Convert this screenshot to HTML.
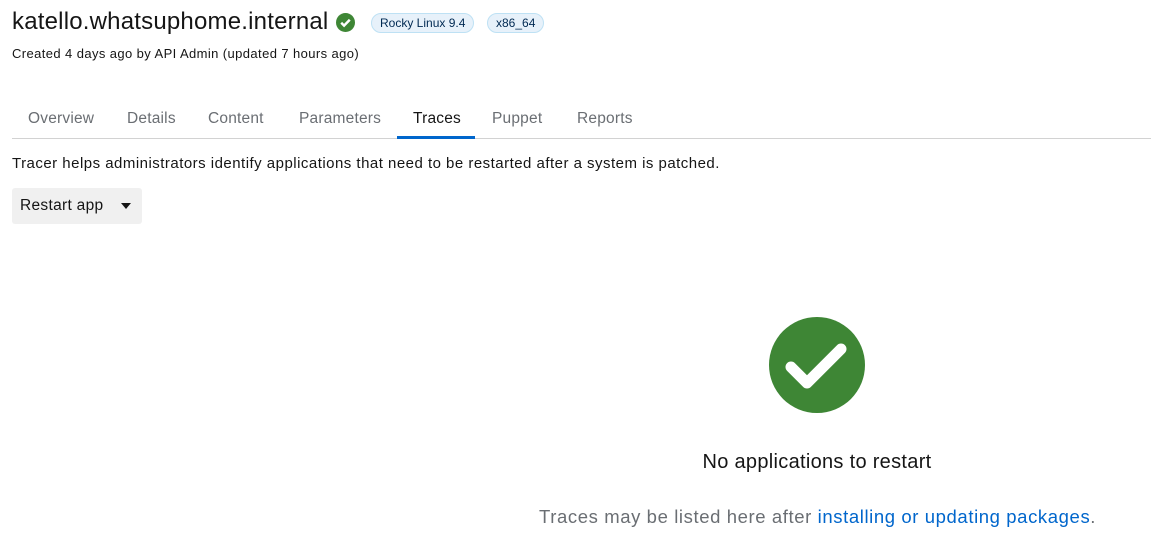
<!DOCTYPE html>
<html><head><style>
body{margin:0;width:1151px;height:556px;background:#fff;font-family:"Liberation Sans",sans-serif;color:#151515;position:relative;overflow:hidden}
.a{position:absolute;white-space:nowrap}
.badge{position:absolute;top:13px;height:18px;border:1px solid #bee1f4;background:#e7f1fa;border-radius:10px;font-size:12px;line-height:18px;padding:0 8px;color:#002952}
.tab{position:absolute;top:110px;font-size:15.5px;color:#6a6e73;letter-spacing:0.2px}
</style></head><body>
<div class="a" style="left:12px;top:8px;font-size:24px;letter-spacing:0.2px">katello.whatsuphome.internal</div>
<svg class="a" style="left:336px;top:13px" width="19" height="19" viewBox="0 0 20 20"><circle cx="10" cy="10" r="10" fill="#3e8635"/><path d="M5.5 10.3l3 3 6-6.2" stroke="#fff" stroke-width="2.6" fill="none"/></svg>
<div class="badge" style="left:371px">Rocky Linux 9.4</div>
<div class="badge" style="left:487px">x86_64</div>
<div class="a" style="left:12px;top:46px;font-size:13px;letter-spacing:0.4px">Created 4 days ago by API Admin (updated 7 hours ago)</div>
<div class="tab" style="left:28px">Overview</div>
<div class="tab" style="left:127px">Details</div>
<div class="tab" style="left:208px">Content</div>
<div class="tab" style="left:299px">Parameters</div>
<div class="tab" style="left:413px;color:#151515">Traces</div>
<div class="tab" style="left:492px">Puppet</div>
<div class="tab" style="left:577px">Reports</div>
<div class="a" style="left:12px;top:138px;width:1139px;height:1px;background:#d2d2d2"></div>
<div class="a" style="left:397px;top:136px;width:78px;height:3px;background:#06c"></div>
<div class="a" style="left:12px;top:155px;font-size:15px;letter-spacing:0.48px">Tracer helps administrators identify applications that need to be restarted after a system is patched.</div>
<div class="a" style="left:12px;top:188px;width:130px;height:36px;background:#f0f0f0;border-radius:3px"></div>
<div class="a" style="left:20px;top:197px;font-size:15.5px;letter-spacing:0.3px">Restart app</div>
<div class="a" style="left:121px;top:203px;width:0;height:0;border-left:5px solid transparent;border-right:5px solid transparent;border-top:6px solid #151515"></div>
<svg class="a" style="left:769px;top:317px" width="96" height="96" viewBox="0 0 96 96"><circle cx="48" cy="48" r="48" fill="#3e8635"/><path d="M22 50l16 16 34-34" stroke="#fff" stroke-width="11" stroke-linecap="round" stroke-linejoin="round" fill="none"/></svg>
<div class="a" style="left:617px;width:400px;text-align:center;top:451px;font-size:20px;letter-spacing:0.3px">No applications to restart</div>
<div class="a" style="left:539px;top:506px;font-size:18.5px;letter-spacing:0.6px;color:#6a6e73">Traces may be listed here after <span style="color:#06c">installing or updating packages</span>.</div>
</body></html>
